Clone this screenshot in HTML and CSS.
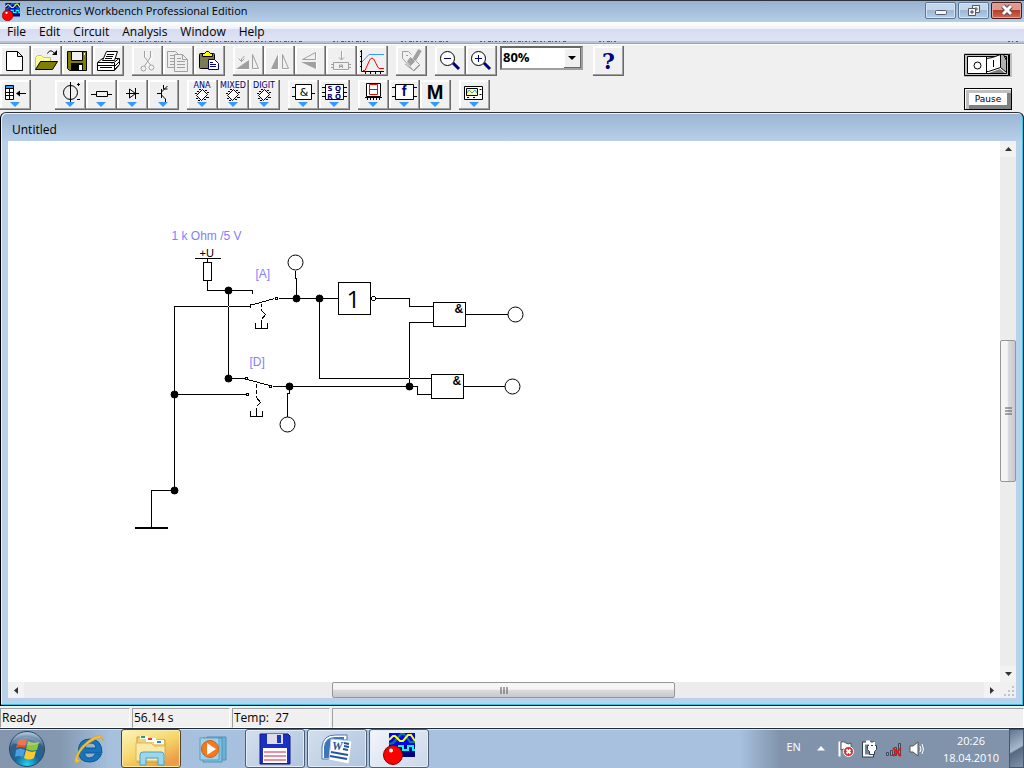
FILE: index.html
```html
<!DOCTYPE html>
<html lang="en">
<head>
<meta charset="utf-8">
<title>Electronics Workbench Professional Edition</title>
<link rel="stylesheet" href="styles.css">
</head>
<body>
<svg class="defs" aria-hidden="true">
  <defs>
    <symbol id="app" viewBox="0 0 32 32">
      <path fill="#00f" d="M6 0h26v12H6z"/><path fill="#000080" d="M6 12h26v12H6z"/>
      <path fill="none" stroke="#008080" stroke-width="2" d="M6 11l4-1 8-9h3l6 8h5"/>
      <path fill="none" stroke="#ff0" stroke-width="2" d="M6 7l4-4h2l5 5h3l5-6h3l4 6"/>
      <path fill="none" stroke="#0ff" stroke-width="2" d="M15 13h5v4h5v-4h5v4h2"/>
      <circle cx="10" cy="22" r="9.500" fill="#f00" stroke="#800000"/><circle cx="8" cy="17.500" r="2" fill="#fff"/>
    </symbol>
    <symbol id="chip" viewBox="0 0 16 16">
      <path d="M8.500 2.500l5 5-6 6-5-5z" fill="#fff" stroke="#000"/><path d="M7 2.500h-2M5 4.500H3M3 6.500H1M11 3.500h2M13 5.500h2M2 11.500h2M4 13.500h2M10 12.500h2M12 10.500h3" stroke="#000" fill="none"/>
    </symbol>
  </defs>
</svg>
<header class="titlebar">
  <svg class="app-icon" width="18" height="18"><use href="#app"/></svg>
  <h1 class="title">Electronics Workbench Professional Edition</h1>
  <div class="win-buttons">
    <button class="win-btn" aria-label="Minimize"><svg width="30" height="16"><rect x="9.500" y="8.500" width="11" height="4" rx="1" fill="#f4f4f4" stroke="#555b6b"/></svg></button>
    <button class="win-btn" aria-label="Restore"><svg width="30" height="16" fill="#f4f4f4" stroke="#555b6b"><path d="M13.500 3.500h7v7h-7zM16 6h2v2h-2z"/><path d="M9.500 6.500h7v7h-7z"/><path d="M12 9h2v2h-2z" fill="#8fa8c8"/></svg></button>
    <button class="win-btn win-close" aria-label="Close"><svg width="30" height="16"><path d="M11 4l8 8M19 4l-8 8" stroke="#5a4a58" stroke-width="5"/><path d="M11 4l8 8M19 4l-8 8" stroke="#fff" stroke-width="3"/></svg></button>
  </div>
</header>
<nav class="menubar" aria-label="Main menu">
  <button class="menu">File</button><button class="menu">Edit</button><button class="menu">Circuit</button><button class="menu">Analysis</button><button class="menu">Window</button><button class="menu">Help</button>
</nav>
<div class="seam"><svg width="1024" height="3"><path d="M60 .5h43M131 .5h40M201 .5h102M333 .5h38M401 .5h48M480 .5h86M599 .5h19M1008 .5h10" stroke="#55519c" stroke-dasharray="2 2 1 3 3 1 1 2"/></svg></div>
<section class="toolbars">
  <div class="rows">
    <div class="row">
      <div class="group">
        <button class="tool" aria-label="New"><svg viewBox="0 0 31 30"><path d="M6.500 5.500h11l5 5v14h-16zM17.500 5.500v5h5" fill="#fff" stroke="#000"/></svg></button>
        <button class="tool" aria-label="Open"><svg viewBox="0 0 31 30"><path d="M4.500 23.500v-12l2-2h4l2 2h7v4" fill="#ffff99" stroke="#c8c85a"/><path d="M9.500 15.500h17l-5 8h-17z" fill="#808000" stroke="#000"/><path d="M16.500 7.500c2-4 5-3 7 0" fill="none" stroke="#000"/><path d="M26 4v5h-5z"/></svg></button>
        <button class="tool" aria-label="Save"><svg viewBox="0 0 31 30"><path d="M5.500 5.500h19v19h-17l-2-2z" fill="#808000" stroke="#000"/><path d="M9.500 5.500h11v9h-11z" fill="#f0f0f0" stroke="#000"/><path d="M9 17h12v8H9z"/><path d="M17 19h3v5h-3zM22 7h1v2h-1z" fill="#fff"/></svg></button>
        <button class="tool" aria-label="Print"><svg viewBox="0 0 31 30"><path d="M4.500 16.500l5-4h17v6l-5 6h-17z" fill="#fff" stroke="#000"/><path d="M9.500 14.500l4-9h11l-3 9z" fill="#fff" stroke="#000"/><path d="M14 8.500h7M13 10.500h7M12 12.500h7M5 16.500h16l5-4M21.500 17v7M5 19.500h16M7 21.500h12M22 20l4-4M22 23l4-4" fill="none" stroke="#000"/><path d="M18 17.500h2" stroke="#cc0"/></svg></button>
      </div>
      <div class="group">
        <button class="tool" aria-label="Cut"><svg viewBox="0 0 31 30" fill="none"><g stroke="#fff" transform="translate(1 1)"><path d="M12 5v6l5 8M19 5v6l-5 8"/><circle cx="11.500" cy="21.500" r="2.500"/><circle cx="19.500" cy="20.500" r="2.500"/></g><g stroke="#a0a0a0"><path d="M12.500 5v6l6 8M18.500 5v6l-6 9"/><circle cx="11.500" cy="22.500" r="2.500"/><circle cx="19.500" cy="21.500" r="2.500"/></g></svg></button>
        <button class="tool" aria-label="Copy"><svg viewBox="0 0 31 30" fill="#eee" stroke="#a0a0a0"><path d="M4.500 5.500h8l4 4v12h-12zM7 9.500h5M7 12.500h5M7 15.500h5M7 18.500h5"/><path d="M11.500 8.500h8l5 5v12h-13zM19.500 8.500v5h5M14 12.500h4M14 15.500h8M14 18.500h8M14 21.500h8"/></svg></button>
        <button class="tool" aria-label="Paste"><svg viewBox="0 0 31 30"><rect x="5.500" y="7.500" width="15" height="15" rx="1" fill="#7d7c50" stroke="#000"/><path d="M8.500 10.500v-3h2l2-2h2l2 2h2v3z" fill="#ff0" stroke="#000"/><path d="M14.500 13.500h6l4 4v6h-10z" fill="#fff" stroke="#000080"/><path d="M16 16.500h3M16 18.500h6M16 20.500h6" stroke="#000080"/></svg></button>
      </div>
      <div class="group">
        <button class="tool" aria-label="Rotate"><svg viewBox="0 0 31 30"><path d="M3 23l13-9v9z" fill="#a0a0a0"/><path d="M19.500 8.500v14h6z" fill="none" stroke="#a0a0a0"/><path d="M8.500 16v-3l3-3M5.500 12.500l3 3 3-3" fill="none" stroke="#a0a0a0"/><path d="M3 23.500h13M20 23.500h7" stroke="#fff"/></svg></button>
        <button class="tool" aria-label="Flip horizontal"><svg viewBox="0 0 31 30"><path d="M7 23l7-15v15z" fill="#a0a0a0"/><path d="M18.500 8.500v14h6z" fill="none" stroke="#a0a0a0"/><path d="M7 23.500h8M18 23.500h8M14.500 8v15" stroke="#fff"/></svg></button>
        <button class="tool" aria-label="Flip vertical"><svg viewBox="0 0 31 30"><path d="M20.500 6.500v7h-13z" fill="none" stroke="#a0a0a0"/><path d="M6 16h15v7z" fill="#a0a0a0"/><path d="M21.500 6v8M21.500 16v7" stroke="#fff"/></svg></button>
        <button class="tool" aria-label="Create subcircuit"><svg viewBox="0 0 31 30" fill="none"><path d="M15.500 5v8M13 11.500l2.500 2.500 2.500-2.500M7.500 16.500h15v7h-15zM5 18.500h2M5 21.500h2M23 18.500h2M23 21.500h2M13.500 22v-3h3v3M13 20.500h4" stroke="#a0a0a0"/><path d="M7 24.500h16M16.500 5v6" stroke="#fff"/></svg></button>
        <button class="tool" aria-label="Display graphs"><svg viewBox="0 0 31 30" fill="none"><path d="M5 16l7-7.500h15" stroke="#39f"/><path d="M6 24.500h2l4-9q3-7 6 0l3 6q1 1 2 1h4" stroke="#f00"/><path d="M4.500 4v21.500H27M3 5.500h1M3 10.500h1M3 15.500h1M3 20.500h1M8.500 26v2M13.500 26v2M18.500 26v2M23.500 26v2" stroke="#000"/></svg></button>
      </div>
      <div class="group">
        <button class="tool" aria-label="Component properties"><svg viewBox="0 0 31 30" fill="none" stroke="#a0a0a0"><path d="M6.500 5.500v7l11 12 6-6-4-4M6.500 5.500h6l3 3M9 18l9 7 6-6M10 9.500h2"/><path d="M24 4l-6 10" stroke-width="4"/><path d="M14.500 11.500l4 4-4 4-3-4z" fill="#a0a0a0"/></svg></button>
      </div>
      <div class="group">
        <button class="tool" aria-label="Zoom out"><svg viewBox="0 0 31 30"><path d="M18 17l6 6" stroke="#000080" stroke-width="3"/><circle cx="12.500" cy="12.500" r="7" fill="#fff" stroke="#000"/><path d="M9 12.500h7" stroke="#000080"/></svg></button>
        <button class="tool" aria-label="Zoom in"><svg viewBox="0 0 31 30"><path d="M18 17l6 6" stroke="#000080" stroke-width="3"/><circle cx="12.500" cy="12.500" r="7" fill="#fff" stroke="#000"/><path d="M9 12.500h7M12.500 9v7" stroke="#000080"/></svg></button>
      </div>
      <div class="combo">
        <select class="zoom" aria-label="Zoom"><option>80%</option><option>100%</option></select>
        <span class="drop" aria-hidden="true"></span>
      </div>
      <button class="tool help" aria-label="Help">?</button>
    </div>
    <div class="row">
      <div class="group parts-bin">
        <button class="tool part" aria-label="Favorites"><svg viewBox="0 0 31 30"><path d="M5.500 5.500h8v14h-8zM5 8.500h8M5 12.500h8M5 15.500h8M9.500 8v12M18 13.500h8" fill="#fff" stroke="#000"/><path d="M6 6h7v2H6z" fill="#39f"/><path d="M16 13.500l4-3v6z"/></svg></button>
      </div>
      <div class="group">
        <button class="tool part" aria-label="Sources"><svg viewBox="0 0 31 30" fill="none" stroke="#000"><circle cx="15.500" cy="12.500" r="7"/><path d="M15.500 2v20M22 4.500h3M23.500 3v3M22 19.500h3"/></svg></button>
        <button class="tool part" aria-label="Basic"><svg viewBox="0 0 31 30" fill="none" stroke="#000"><path d="M5 14.500h5M21 14.500h5M10.500 11.500h11v5h-11z"/></svg></button>
        <button class="tool part" aria-label="Diodes"><svg viewBox="0 0 31 30" fill="none" stroke="#000"><path d="M9 13.500h13M12.500 9v9l6-4.500zM18.500 8v11"/></svg></button>
        <button class="tool part" aria-label="Transistors"><svg viewBox="0 0 31 30" fill="none" stroke="#000"><path d="M9 13.500h4M13.500 9v9M13.500 12l6-6M13.500 15l4 4v3"/><path d="M15.500 5v4h4" /></svg></button>
      </div>
      <div class="group">
        <button class="tool part" aria-label="Analog ICs"><svg viewBox="0 0 31 30"><text x="15" y="8" class="cap">ANA</text><use href="#chip" x="7" y="7" width="16" height="16"/></svg></button>
        <button class="tool part" aria-label="Mixed ICs"><svg viewBox="0 0 31 30"><text x="15" y="8" class="cap">MIXED</text><use href="#chip" x="7" y="7" width="16" height="16"/></svg></button>
        <button class="tool part" aria-label="Digital ICs"><svg viewBox="0 0 31 30"><text x="15" y="8" class="cap">DIGIT</text><use href="#chip" x="7" y="7" width="16" height="16"/></svg></button>
      </div>
      <div class="group">
        <button class="tool part" aria-label="Logic gates"><svg viewBox="0 0 31 30"><path d="M7.500 4.500h16v15h-16zM4 7.500h3M4 16.500h3M24 13.500h3" fill="#fff" stroke="#000"/><text x="16" y="16" class="amp">&amp;</text></svg></button>
        <button class="tool part" aria-label="Digital"><svg viewBox="0 0 31 30"><path d="M6.500 4.500h18v15h-18zM3 7.500h3M3 12.500h3M3 16.500h3M25 7.500h3M25 12.500h3M25 16.500h3M17 12.500h4" fill="#fff" stroke="#000"/><text x="11" y="11" class="pinname">S</text><text x="19" y="11" class="pinname">Q</text><text x="11" y="19" class="pinname">R</text><text x="19" y="19" class="pinname">Q</text></svg></button>
      </div>
      <div class="group">
        <button class="tool part" aria-label="Indicators"><svg viewBox="0 0 31 30" fill="none"><path d="M8.500 3.500h14v13h-14z" fill="#fff" stroke="#000"/><path d="M7 17.500h17M9.500 18v2M12.500 18v2M15.500 18v2M18.500 18v2M21.500 18v2" stroke="#000"/><path d="M11.500 4.500h8v10h-8zM12 9.500h7" stroke="#f00"/></svg></button>
        <button class="tool part" aria-label="Controls"><svg viewBox="0 0 31 30"><path d="M6.500 4.500h18v15h-18zM3 7.500h3M3 16.500h3M25 7.500h3M25 16.500h3" fill="#fff" stroke="#000"/><text x="15" y="16" class="fn">f</text></svg></button>
        <button class="tool part" aria-label="Miscellaneous"><svg viewBox="0 0 31 30"><text x="15" y="19" class="em">M</text></svg></button>
      </div>
      <div class="group">
        <button class="tool part" aria-label="Instruments"><svg viewBox="0 0 31 30"><path d="M5.500 6.500h18v13h-18z" fill="#fff" stroke="#000"/><path d="M7.500 8.500h11v7h-11z" fill="#ffff8c" stroke="#000"/><path d="M8 13l2-3 3 3 3-3 2 3" fill="none" stroke="#39f"/><path d="M20.500 9.500h2M20.500 14.500h2M8 17.500h2M14 17.500h2" stroke="#000"/></svg></button>
      </div>
    </div>
  </div>
  <div class="sim">
    <button class="power" aria-label="Activate simulation"><svg width="48" height="24"><path d="M0 0h48v24H0z" fill="#c0c0c0"/><path d="M.5 1.500h44v21H.5z" fill="#c0c0c0" stroke="#000"/><path d="M45.500 1v22" stroke="#000"/><path d="M3.500 3.500h39v17h-39z" fill="#fff" stroke="#000"/><path d="M22.500 4v16M22.500 5.500l6-1 8-3v13l-12 4h-2z" fill="#fff" stroke="#000"/><path d="M36.500 1.500h3l3 6v12l-6-5z" fill="#b0b0b0" stroke="#000"/><path d="M25 20l11-4 5 4z" fill="#808080"/><path d="M29.500 7v7" stroke="#000"/><circle cx="13.500" cy="12.500" r="3.500" fill="none" stroke="#000"/></svg></button>
    <button class="pause">Pause</button>
  </div>
</section>
<main class="doc">
  <h2 class="doc-title">Untitled</h2>
  <div class="work">
    <div class="canvas">
      <svg width="992" height="541" viewBox="7.500 140.500 992 541" role="img" aria-label="Logic circuit" fill="none" stroke="#000">
        <g class="wires">
          <path d="M194 258H220M207 258V262M207 280V290H252V293M228 290V378H245M174 490V306H250M278 298H338M319 298V378H431M375 298H409V306H433M433 322H409V386M465 314H507M463 386H504M174 394H245M272 386H417V394H431M295 270V278H296V298M289 386V393H287V416M174 490H151V527"/>
          <path d="M228 306h0M409 378h0" class="gap"/>
          <path d="M134 527.500H167" stroke-width="2"/>
          <path d="M250 307V304H252M253 304L274 298M261 303V306M261 319V328M255 322V328H267V322M247 379L269 385M256 383V387M256 389V393M256 407V416M250 410V416H262V410"/>
          <path d="M261 308V310L265 314 261 319M256 395V397L260 402 256 406"/>
          <path d="M203 262H211V280H203zM338 282H370V314H338zM433 302H465V326H433zM431 374H463V398H431z" class="fillw"/>
          <path d="M275 297h2v2h-2zM245 377h2v2h-2zM269 385h2v2h-2zM246 393h2v2h-2z" class="fillw"/>
          <circle cx="373" cy="298" r="2" class="fillw"/>
        </g>
        <g class="fillw"><circle cx="295" cy="262" r="7.500"/><circle cx="515" cy="314" r="7.500"/><circle cx="512" cy="386" r="7.500"/><circle cx="287" cy="424" r="7.500"/></g>
        <g fill="#000"><circle cx="228" cy="290" r="3.500"/><circle cx="296" cy="298" r="3.500"/><circle cx="319" cy="298" r="3.500"/><circle cx="228" cy="378" r="3.500"/><circle cx="174" cy="394" r="3.500"/><circle cx="289" cy="386" r="3.500"/><circle cx="409" cy="386" r="3.500"/><circle cx="174" cy="490" r="3.500"/></g>
        <text x="171" y="239" class="label">1 k Ohm /5 V</text>
        <text x="255" y="277" class="label">[A]</text>
        <text x="249" y="365" class="label">[D]</text>
        <text x="199" y="256" class="pin">+U</text>
        <text x="346" y="307" class="one">1</text>
        <text x="454" y="312" class="and">&amp;</text>
        <text x="452" y="384" class="and">&amp;</text>
      </svg>
    </div>
    <div class="vbar">
      <button class="arrow" aria-label="Scroll up"><svg width="7" height="4"><path d="M0 4l3.500-4L7 4z"/></svg></button>
      <div class="vtrack"><div class="vthumb"><svg width="7" height="8"><path d="M0 1h7M0 4h7M0 7h7" stroke="#555"/></svg></div></div>
      <button class="arrow" aria-label="Scroll down"><svg width="7" height="4"><path d="M0 0h7L3.500 4z"/></svg></button>
    </div>
    <div class="hbar">
      <button class="arrow" aria-label="Scroll left"><svg width="4" height="7"><path d="M4 0v7L0 3.500z"/></svg></button>
      <div class="htrack"><div class="hthumb"><svg width="8" height="7"><path d="M1 0v7M4 0v7M7 0v7" stroke="#555"/></svg></div></div>
      <button class="arrow" aria-label="Scroll right"><svg width="4" height="7"><path d="M0 0v7l4-3.500z"/></svg></button>
    </div>
    <div class="grip"><svg width="10" height="10"><path d="M8 0h2v2H8zM4 4h2v2H4zM8 4h2v2H8zM0 8h2v2H0zM4 8h2v2H4zM8 8h2v2H8z" fill="#c0c4c8"/></svg></div>
  </div>
</main>
<footer class="status">
  <span class="cell cell-ready">Ready</span><span class="cell">56.14 s</span><span class="cell">Temp:&nbsp; 27</span><span class="cell cell-rest"></span>
</footer>
<nav class="taskbar" aria-label="Taskbar">
  <button class="start" aria-label="Start">
    <svg width="38" height="38" viewBox="0 0 38 38">
      <defs><radialGradient id="orb" cx=".5" cy=".95" r=".9"><stop offset="0" stop-color="#1fd5f5"/><stop offset=".4" stop-color="#17659a"/><stop offset=".75" stop-color="#345e86"/><stop offset="1" stop-color="#a9c2d6"/></radialGradient></defs>
      <circle cx="19" cy="19" r="17.500" fill="url(#orb)" stroke="#294861"/>
      <path d="M10 11q4-3 9-1l-2 8q-5-2-9 0z" fill="#e8552a"/><path d="M20 11q5 3 11 1l-2 8q-6 2-11-1z" fill="#8cc63f"/><path d="M8 20q4-3 9 0l-2 7q-4-2-8 0z" fill="#4a9fe0"/><path d="M18 20q5 3 10 1l-2 7q-5 3-10 0z" fill="#fcc92e"/>
      <path d="M5 13Q19 1 33 13 19 18 5 13" fill="#fff" opacity=".2"/>
    </svg>
  </button>
  <button class="task" aria-label="Internet Explorer">
    <svg width="34" height="34" viewBox="0 0 34 34"><path d="M23 22h6.500q-3 8-12 8-11 0-11-11.500T18 7q12 0 12 14H12.500q.5 5 5 5 4 0 5.500-4zM13 16h11q-.5-5-5-5t-6 5z" fill="#1673bd" stroke="#0f5590"/><path d="M9 28Q2 34 3 27 7 13 22 5q10-4 9 4 1-5-7-2Q9 15 6 25q-1 4 3 3z" fill="#f6c02e" stroke="#d99b18" stroke-width=".5"/></svg>
  </button>
  <button class="task task-files" aria-label="Explorer">
    <svg width="36" height="34" viewBox="0 0 36 34"><path d="M4 5h10l2 3h16v22H4z" fill="#efd27b" stroke="#c69b3a"/><path d="M7 4h8v3H7z" fill="#fff"/><path d="M8 4h4v2H8z" fill="#2a4"/><path d="M13 6h10v4H13z" fill="#fff"/><path d="M15 6h4v2h-4z" fill="#d42"/><path d="M21 8h10v4H21z" fill="#fff"/><path d="M24 9h4v2h-4z" fill="#28d"/><path d="M3 11h15l3 3h11v15H3z" fill="#fbe9a4" stroke="#dbb85a"/><path d="M7 33V23q0-3 3-3h18q3 0 3 3v10h-6v-7H13v7z" fill="#9bd5ee" stroke="#4f9fc6"/></svg>
  </button>
  <button class="task" aria-label="Media Player">
    <svg width="32" height="30" viewBox="0 0 32 30"><path d="M10 3h19v23H10z" fill="#6bb3d6" stroke="#4b93b8"/><path d="M6 4h19v24H6z" fill="#82c3e2" stroke="#4b93b8"/><path d="M3 4h19v22H3z" fill="#9dd3ea" stroke="#5b9fc2"/><circle cx="13" cy="15" r="8.500" fill="#f47a20" stroke="#d65f10"/><path d="M10 9l9 6-9 6z" fill="#fff"/></svg>
  </button>
  <button class="task task-open" aria-label="Save utility">
    <svg width="32" height="34" viewBox="0 0 32 34"><path d="M1 2h28l2 2v28H1z" fill="#1c2fc4" stroke="#101a74"/><path d="M8 2h16v10H8z" fill="#dcdde6"/><path d="M18 3h4v8h-4z" fill="#1c2fc4"/><path d="M4 16h24v15H4z" fill="#fff"/><path d="M5 20h22M5 24h22M5 28h22" stroke="#d2233c"/></svg>
  </button>
  <button class="task task-open" aria-label="Word">
    <svg width="34" height="34" viewBox="0 0 34 34"><path d="M2 27V15Q3 3 15 3h12v5H12v19z" fill="#fff" stroke="#4a77b5"/><path d="M4 26V15Q5 5 15 5h9v3H12v18z" fill="#3e75bd"/><path d="M11 7l21 2-3 23-20-4z" fill="#fff" stroke="#b9cce2"/><text x="12" y="18" class="word">W</text><path d="M24 11l5 1M24 14l5 1M23 17l5 1M11 20l17 3M10 24l17 3" stroke="#23569f" stroke-width="2"/></svg>
  </button>
  <button class="task task-open task-active" aria-label="Electronics Workbench"><svg width="32" height="32"><use href="#app"/></svg></button>
  <div class="tray">
    <span class="lang">EN</span>
    <svg class="up" width="8" height="5"><path d="M0 4.500L4 0l4 4.500z" fill="#fff"/></svg>
    <svg width="18" height="18"><path d="M2.500 1.500v15" stroke="#fff" stroke-width="2"/><path d="M4 2q3-1 5 1t5 0v8q-3 1-5-1t-5 0z" fill="#fff" stroke="#555"/><circle cx="11.500" cy="11.500" r="5" fill="#d22f2f" stroke="#fff"/><path d="M9.500 9.500l4 4m0-4l-4 4" stroke="#fff" stroke-width="2"/></svg>
    <svg width="18" height="18"><path d="M3 3.500h8v12H3z" fill="#728299" stroke="#333e4d" stroke-width="4"/><path d="M3 3.500h8v12H3zM5 1.500h4" fill="#728299" stroke="#fff" stroke-width="2"/><path d="M6.500 5.500h9v4l-2 2v3h-5v-3l-2-2z" fill="#fff" stroke="#333e4d"/><path d="M9 2v4M13 2v4" stroke="#fff" stroke-width="2"/></svg>
    <svg width="18" height="18"><path d="M1.500 12.500h2v3h-2zM5.500 10.500h2v5h-2zM9.500 7.500h2v8h-2zM13.500 3.500h2v12h-2z" fill="#8fa0b5" stroke="#3d4a5a"/><path d="M8 8l8 8m0-8l-8 8" stroke="#e01818" stroke-width="2"/></svg>
    <svg width="18" height="18"><path d="M1 6h3l5-4v14l-5-4H1z" fill="#fff" stroke="#555"/><path d="M11 6q2 3 0 6M13 4q3 5 0 10" fill="none" stroke="#fff"/></svg>
    <div class="clock"><span>20:26</span><span>18.04.2010</span></div>
  </div>
  <button class="show" aria-label="Show desktop"></button>
</nav>
</body>
</html>
```

FILE: styles.css
```css
* { box-sizing: border-box; }
body {
  margin: 0;
  height: 100vh;
  display: flex;
  flex-direction: column;
  overflow: hidden;
  background: #f0f0f0;
  color: #000;
  font: 12px/16px "Open Sans", "Noto Sans", sans-serif;
}
button { font: inherit; color: inherit; padding: 0; margin: 0; border: 0; background: none; }
svg { display: block; flex: none; }
h1, h2 { margin: 0; font: inherit; }
.defs { position: absolute; width: 0; height: 0; }

.titlebar {
  display: flex;
  align-items: center;
  gap: 6px;
  height: 22px;
  padding: 0 2px;
  border-top: 1px solid #2c333c;
  background: linear-gradient(#97b2d0, #b6cee8);
}
.title { flex: 1; padding-bottom: 2px; font-size: 11px; }
.win-buttons { display: flex; gap: 2px; align-self: flex-start; padding-top: 1px; }
.win-btn {
  width: 31px;
  height: 17px;
  border: 1px solid #5d7696;
  border-radius: 2px;
  box-shadow: inset 0 0 0 1px #d5e3f2;
  background: linear-gradient(#c4d6ea 50%, #9db7d5 50%, #b5cce5);
}
.win-btn svg { margin: -1px auto 0; }
.win-close {
  border-color: #4d1a1e;
  box-shadow: inset 0 0 0 1px #e0a49c;
  background: linear-gradient(#dc9a8e 45%, #b53a25 45%, #cf6a52);
}

.menubar {
  display: flex;
  gap: 13px;
  height: 19px;
  padding: 0 7px;
  background: linear-gradient(#fff, #eef1f9 36%, #d6dcf0 36%, #dfe4f5);
}
.menu { font-size: 12px; line-height: 18px; }
.seam { height: 3px; overflow: hidden; background: #b9c4d6; border-bottom: 1px solid #a0a0a0; }

.toolbars { display: flex; justify-content: space-between; padding: 1px 12px 2px 0; height: 68px; border-top: 1px solid #fff; }
.rows { display: flex; flex-direction: column; gap: 4px; }
.row { display: flex; gap: 8px; }
.group { display: flex; }
.parts-bin { margin-right: 16px; }
.tool {
  position: relative;
  width: 31px;
  height: 30px;
  background: #f0f0f0;
  box-shadow: inset -1px -1px #696969, inset -2px -2px #a0a0a0, inset 2px 2px #fff;
}
.tool svg { width: 31px; height: 30px; }
.part::after {
  content: "";
  position: absolute;
  left: 10px;
  top: 22px;
  border: 5px solid transparent;
  border-top-color: #39f;
  border-bottom: 0;
}
.cap { font: 8px "DejaVu Sans", sans-serif; fill: #000080; text-anchor: middle; }
.pinname { font: bold 7px "DejaVu Sans", sans-serif; fill: #000080; text-anchor: middle; }
.amp { font: 11px "DejaVu Sans", sans-serif; text-anchor: middle; }
.fn { font: bold 14px "Liberation Sans", sans-serif; fill: #000080; text-anchor: middle; }
.em { font: bold 20px "Liberation Sans", sans-serif; text-anchor: middle; }
.help { margin-left: 2px; font: bold 22px/28px "DejaVu Serif", serif; color: #000080; }
.combo { position: relative; width: 83px; height: 24px; margin-left: -5px; }
.zoom {
  width: 100%;
  height: 24px;
  padding: 0 20px 2px 1px;
  appearance: none;
  border: 2px solid #696969;
  border-right-color: #a0a0a0;
  border-bottom-color: #a0a0a0;
  border-radius: 0;
  background: #fff;
  color: #000;
  font: bold 13px "Open Sans", sans-serif;
}
.drop {
  position: absolute;
  right: 2px;
  top: 2px;
  width: 17px;
  height: 20px;
  background: #f0f0f0;
  box-shadow: inset -1px -1px #696969, inset 1px 1px #fff;
  pointer-events: none;
}
.drop::after {
  content: "";
  position: absolute;
  left: 4px;
  top: 8px;
  border: 4px solid transparent;
  border-top-color: #000;
  border-bottom: 0;
}
.sim { display: flex; flex-direction: column; gap: 11px; padding-top: 7px; }
.power { height: 24px; }
.pause {
  width: 48px;
  height: 23px;
  border: 1px solid #000;
  box-shadow: inset 1px 1px #fff, inset 4px 4px #c0c0c0, inset -4px -4px #808080;
  background: #fff;
  font: 9px "DejaVu Sans", sans-serif;
}

.doc {
  flex: 1;
  min-height: 0;
  display: flex;
  flex-direction: column;
  padding: 0 7px 7px;
  border: 1px solid #000;
  border-top-color: #333;
  border-radius: 6px 6px 0 0;
  box-shadow: inset -1px -1px #19d3f0, inset 1px 1px #e6f1fb;
  background: linear-gradient(#9ab5d3, #b9d1ea 30px);
}
.doc-title { height: 28px; padding-left: 4px; line-height: 34px; font-size: 12px; }
.work { flex: 1; min-height: 0; display: grid; grid-template: minmax(0, 1fr) 16px / minmax(0, 1fr) 16px; }
.canvas { overflow: hidden; background: #fff; }
.vbar, .hbar { display: flex; background: #ececec; }
.vbar { flex-direction: column; }
.arrow { display: grid; place-items: center; width: 16px; height: 16px; background: #f2f2f2; fill: #333; }
.vtrack, .htrack { flex: 1; display: flex; }
.vtrack { flex-direction: column; padding-top: 183px; }
.htrack { padding-left: 308px; }
.vthumb, .hthumb { display: grid; place-items: center; border: 1px solid #979797; border-radius: 2px; }
.vthumb { height: 142px; background: linear-gradient(90deg, #f5f5f5 45%, #dcdce0 50%, #c8c8cf); }
.hthumb { width: 343px; background: linear-gradient(#f5f5f5 45%, #dcdcdc 50%, #c8c8c8); }
.grip { display: grid; place-items: end; padding: 2px; background: #f0f0f0; }

.status { display: flex; gap: 2px; height: 22px; padding-top: 2px; font-size: 12px; }
.cell { width: 98px; padding-left: 1px; line-height: 18px; border: 1px solid #a0a0a0; border-right-color: #fff; border-bottom-color: #fff; }
.cell-ready { width: 130px; }
.cell-rest { flex: 1; }

.taskbar {
  display: flex;
  align-items: stretch;
  gap: 2px;
  height: 40px;
  border-top: 1px solid #1d2a3a;
  box-shadow: inset 0 1px #d5e2f0;
  background: linear-gradient(90deg, #8396ad 0, #8498b0 60px, #a6c0dd 110px, #a7c1de calc(100% - 284px), #8093ab calc(100% - 244px), #8093ab);
}
.start { width: 57px; padding-left: 8px; }
.task { width: 60px; display: grid; place-items: center; border-radius: 3px; }
.task-files { border: 1px solid #51452f; box-shadow: inset 0 0 0 1px #fbe9a8; background: linear-gradient(155deg, #fdf5bd, #f5d569 50%, #ee9c48 85%); }
.task-open { border: 1px solid #4d5e75; box-shadow: inset 0 0 0 1px #e4edf7; background: linear-gradient(135deg, #d3dfed, #b0c5de); }
.task-active { background: linear-gradient(135deg, #f3f6fa, #cad7e8); }
.word { font: italic bold 12px "Liberation Serif", serif; fill: #23569f; }
.tray { margin-left: auto; display: flex; align-items: center; gap: 6px; color: #fff; }
.lang { margin-right: 10px; padding-bottom: 4px; font-size: 11px; }
.up { margin-right: 6px; }
.clock { display: flex; flex-direction: column; align-items: center; margin: 0 8px 0 10px; line-height: 17px; font-size: 11px; }
.show { width: 15px; border: 1px solid #46566b; background: linear-gradient(150deg, #607590, #a7b9cd 50%, #56687e 55%, #7f93ab); }

.fillw { fill: #fff; }
.wires { shape-rendering: crispEdges; }
.gap { stroke: #fff; stroke-linecap: square; }
.label { font: 12px "Liberation Sans", sans-serif; fill: #8080ff; stroke: none; }
.pin { font: 11px "Liberation Sans", sans-serif; fill: #000; stroke: none; }
.one { font: 24px "Open Sans", sans-serif; fill: #000; stroke: none; }
.and { font: bold 12px "Liberation Sans", sans-serif; fill: #000; stroke: none; }
```
